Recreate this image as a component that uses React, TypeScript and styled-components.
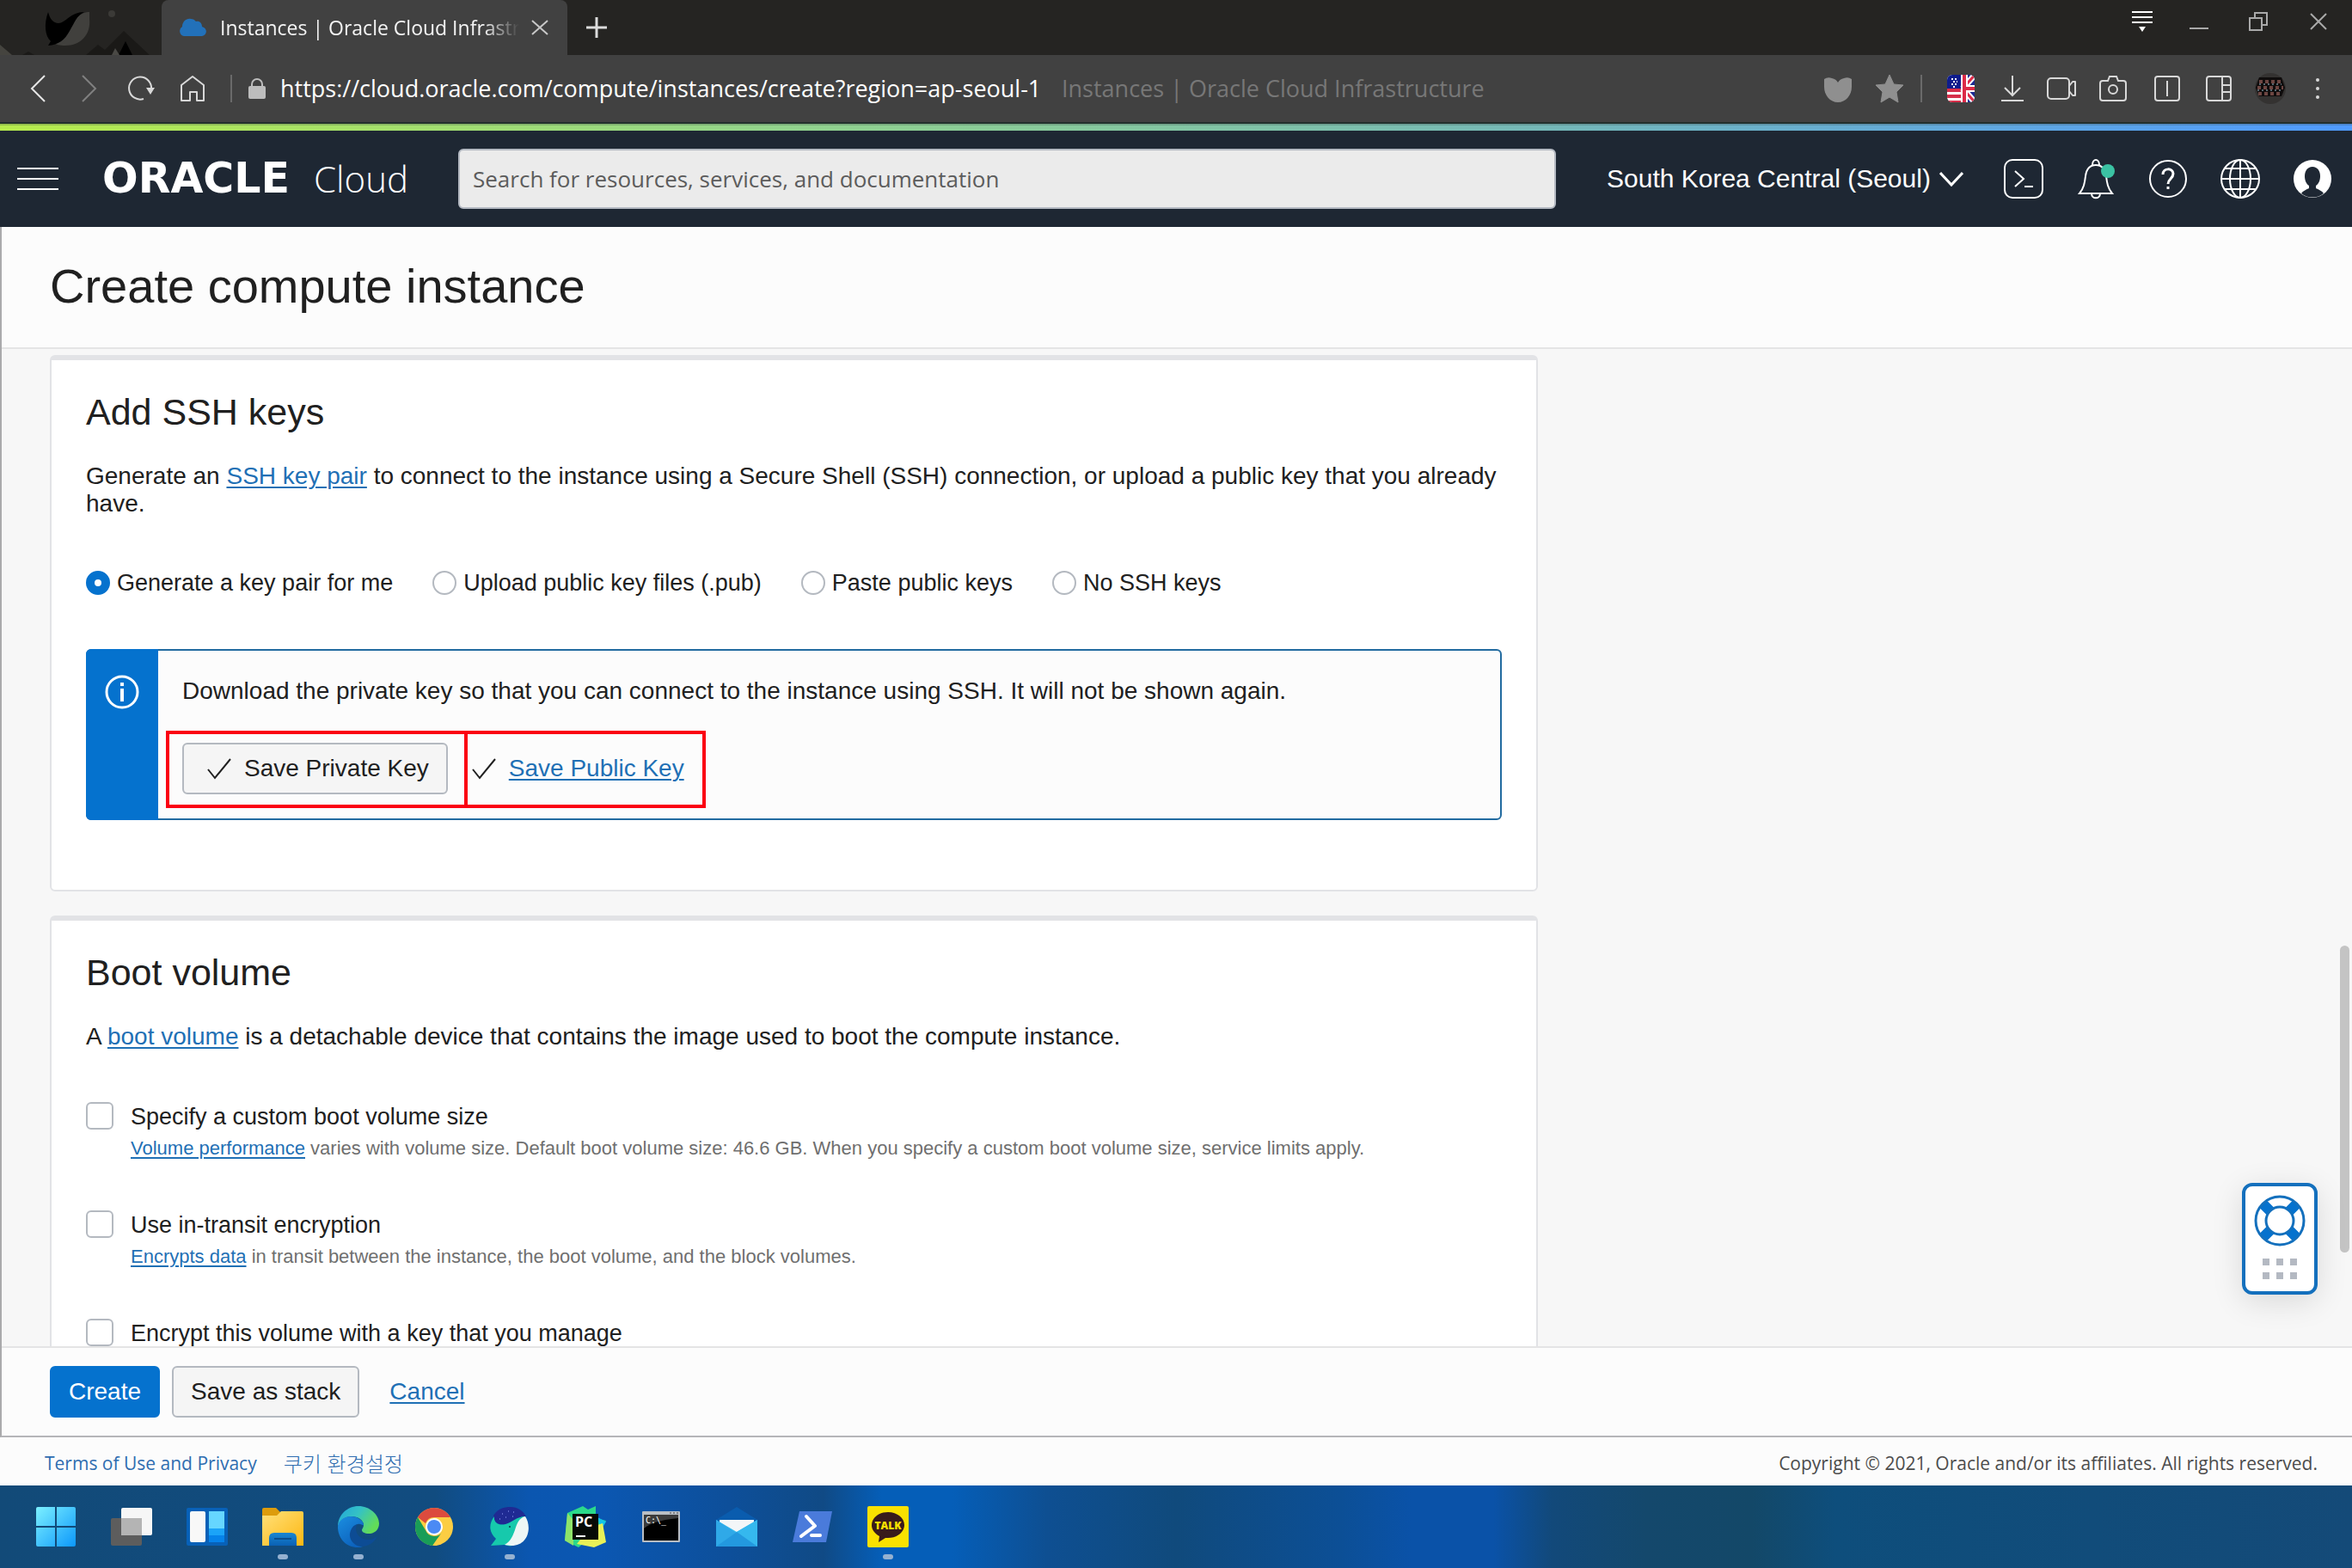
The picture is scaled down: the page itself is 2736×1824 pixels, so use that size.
import React from "react";
import styled, { createGlobalStyle } from "styled-components";

const sans = `"Liberation Sans", Arial, "Noto Sans CJK KR", sans-serif`;
const ui = `"Open Sans", "Noto Sans", "Noto Sans CJK KR", sans-serif`;

const Global = createGlobalStyle`
  *, *::before, *::after { box-sizing: border-box; }
  body { margin: 0; background: #f7f7f7; color: #202020; font-family: ${sans}; font-size: 28px; line-height: 32px; }
  button, input, select { font: inherit; color: inherit; margin: 0; }
  h1, h2, p { margin: 0; font-weight: 400; }
`;

const Screen = styled.div`
  display: flex;
  flex-direction: column;
  height: 100vh;
  overflow: hidden;
`;

/* ---------- Browser chrome ---------- */

const TabStrip = styled.header`
  display: flex;
  flex: none;
  height: 64px;
  background: #252422;
  font-family: ${ui};
`;

const Skin = styled.svg`
  display: block;
  width: 188px;
  height: 64px;
  flex: none;
`;

const Tab = styled.div`
  display: flex;
  align-items: center;
  width: 472px;
  padding: 0 20px;
  background: #414141;
  border-radius: 8px 8px 0 0;
  color: #f4f4f4;
`;

const TabTitle = styled.span`
  flex: 1;
  margin: 0 12px 0 16px;
  font-size: 23px;
  overflow: hidden;
  white-space: nowrap;
  mask-image: linear-gradient(90deg, #000 88%, transparent);
`;

const Spacer = styled.div`
  flex: 1;
`;

const IconButton = styled.button<{ $w?: number }>`
  display: flex;
  align-items: center;
  justify-content: center;
  flex: none;
  width: ${(p) => p.$w ?? 60}px;
  padding: 0;
  border: 0;
  background: none;
  svg { display: block; overflow: visible; }
`;

const WindowButtons = styled.div`
  display: flex;
  height: 50px;
  padding-right: 4px;
`;

const Toolbar = styled.nav`
  display: flex;
  flex: none;
  align-items: stretch;
  height: 80px;
  padding: 0 15px 0 14px;
  background: #414141;
  border-bottom: 2px solid #23302d;
  font-family: ${ui};
`;

const Divider = styled.span<{ $m: string }>`
  flex: none;
  align-self: center;
  width: 2px;
  height: 32px;
  margin: ${(p) => p.$m};
  background: #6a6a6a;
`;

const Address = styled.div`
  display: flex;
  flex: 1;
  align-items: center;
  gap: 17px;
  min-width: 0;
  font-size: 27px;
  white-space: nowrap;
  color: #777;
`;

const UrlInput = styled.input`
  width: 892px;
  padding: 0;
  border: 0;
  background: none;
  color: #fff;
  line-height: 40px;
`;

/* ---------- Oracle header ---------- */

const Rainbow = styled.div`
  flex: none;
  height: 8px;
  background: linear-gradient(90deg, #b6ec4c, #92d48c 33%, #74b8b8 66%, #4f9bff);
  border-top: 2px solid rgba(60, 70, 70, 0.25);
`;

const CloudHeader = styled.header`
  display: flex;
  flex: none;
  align-items: center;
  height: 112px;
  padding-right: 4px;
  background: #1e2733;
  color: #fff;
`;

const Brand = styled.a`
  display: flex;
  align-items: baseline;
  justify-content: space-between;
  flex: none;
  width: 356px;
  margin: 0 58px 0 31px;
  color: #fff;
  text-decoration: none;
  line-height: 60px;
`;

const BrandName = styled.span`
  font: 700 49px/60px "DejaVu Sans", sans-serif;
`;

const BrandProduct = styled.span`
  font: 300 42px/60px "Open Sans", sans-serif;
`;

const Search = styled.input`
  flex: 1;
  min-width: 0;
  height: 70px;
  padding: 0 15px;
  border: 2px solid #b4b9c2;
  border-radius: 6px;
  background: #ebebeb;
  font-family: ${ui};
  font-size: 26px;
  &::placeholder { color: #5c5c5c; opacity: 1; }
`;

const Region = styled.label`
  display: flex;
  align-items: center;
  gap: 10px;
  margin: 0 28px 0 59px;
  svg { display: block; }
`;

const RegionSelect = styled.select`
  appearance: none;
  padding: 0;
  border: 0;
  background: none;
  font-size: 30px;
`;

/* ---------- Page ---------- */

const Page = styled.main`
  position: relative;
  display: flex;
  flex: 1;
  flex-direction: column;
  min-height: 0;
  border-left: 2px solid #aaaaac;
  border-bottom: 2px solid #b5b5b9;
`;

const TitleBar = styled.div`
  flex: none;
  padding: 37px 56px 39px;
  background: #fcfcfc;
  border-bottom: 2px solid #e4e4e5;
`;

const PageTitle = styled.h1`
  font-size: 56px;
  line-height: 64px;
`;

const Scroller = styled.div`
  flex: 1;
  min-height: 0;
  overflow: hidden;
  padding: 7px 15px 0 56px;
`;

const Sections = styled.div`
  display: flex;
  flex-direction: column;
  gap: 28px;
  width: 65%;
`;

const Card = styled.section`
  padding: 35px 40px 81px;
  background: #fff;
  border: 2px solid #e2e3e6;
  border-top-width: 6px;
  border-radius: 6px;
`;

const CardTitle = styled.h2`
  margin-bottom: 34px;
  font-size: 43px;
  line-height: 50px;
`;

const Lead = styled.p`
  margin-bottom: 60px;
`;

const Link = styled.a`
  color: #1f70b5;
  text-decoration: underline 2px;
  text-underline-offset: 3px;
`;

const RadioRow = styled.div`
  display: flex;
  gap: 46px;
  margin-bottom: 61px;
`;

const RadioLabel = styled.label`
  display: flex;
  align-items: center;
  gap: 8px;
  font-size: 27px;
  white-space: nowrap;
`;

const Radio = styled.input`
  appearance: none;
  width: 28px;
  height: 28px;
  border: 2px solid #b4b9c0;
  border-radius: 50%;
  background: #fff;
  &:checked { border: 10px solid #0572ce; }
`;

const Alert = styled.div`
  display: flex;
  background: #fcfcfc;
  border: 2px solid #226ba0;
  border-radius: 6px;
`;

const AlertSide = styled.div`
  display: flex;
  justify-content: center;
  flex: none;
  width: 84px;
  margin: -2px 0 -2px -2px;
  padding-top: 30px;
  background: #0572ce;
  border-radius: 6px 0 0 6px;
`;

const AlertBody = styled.div`
  padding: 31px 28px 28px;
`;

const KeyActions = styled.div`
  display: flex;
  gap: 28px;
  margin-top: 44px;
`;

const Marked = styled.div<{ $inset: string }>`
  position: relative;
  display: flex;
  align-items: center;
  gap: 15px;
  &::after {
    content: "";
    position: absolute;
    inset: ${(p) => p.$inset};
    border: 4px solid #fb0012;
    pointer-events: none;
  }
`;

const Button = styled.button<{ $primary?: boolean }>`
  display: flex;
  align-items: center;
  gap: 15px;
  height: 60px;
  padding: 0 20px;
  border: 2px solid ${(p) => (p.$primary ? "#0572ce" : "#b4b9c0")};
  border-radius: 6px;
  background: ${(p) => (p.$primary ? "#0572ce" : "#f5f5f5")};
  color: ${(p) => (p.$primary ? "#fff" : "#202020")};
`;

const MarkSlot = styled.span`
  display: flex;
  margin-left: 7px;
`;

const Option = styled.div`
  display: grid;
  grid-template-columns: 32px 1fr;
  column-gap: 20px;
  margin-bottom: 58px;
`;

const Checkbox = styled.input`
  appearance: none;
  width: 32px;
  height: 32px;
  border: 2px solid #b4b9c0;
  border-radius: 6px;
  background: #fff;
`;

const OptionLabel = styled.label`
  font-size: 27px;
  line-height: 34px;
`;

const Hint = styled.p`
  grid-column: 2;
  margin-top: 6px;
  color: #6f6f6f;
  font-size: 22px;
  line-height: 28px;
`;

const Actions = styled.div`
  display: flex;
  flex: none;
  align-items: center;
  gap: 14px;
  height: 104px;
  padding: 0 56px;
  background: #fcfcfc;
  border-top: 2px solid #e4e4e5;
`;

const CancelLink = styled(Link)`
  margin-left: 21px;
`;

const ScrollThumb = styled.div`
  position: absolute;
  right: 3px;
  top: 836px;
  width: 11px;
  height: 357px;
  border-radius: 6px;
  background: #c4c4c4;
`;

const HelpWidget = styled.button`
  position: absolute;
  right: 40px;
  bottom: 164px;
  display: flex;
  flex-direction: column;
  align-items: center;
  width: 88px;
  height: 130px;
  padding: 10px 0 0;
  border: 4px solid #1470bd;
  border-radius: 12px;
  background: #fff;
  box-shadow: 0 8px 36px rgba(0, 0, 0, 0.12);
`;

const Dots = styled.span`
  display: grid;
  grid-template-columns: repeat(3, 8px);
  gap: 8px;
  margin-top: 14px;
  i { height: 8px; background: #b4b9c2; }
`;

const PageFooter = styled.footer`
  display: flex;
  flex: none;
  align-items: center;
  gap: 31px;
  height: 56px;
  padding: 4px 40px 0 52px;
  background: #fcfcfc;
  color: #4c4c4c;
  font-family: ${ui};
  font-size: 21px;
`;

const FooterLink = styled.a`
  color: #2f6db0;
  text-decoration: none;
  &:lang(ko) {
    font-family: "Noto Sans CJK KR", sans-serif;
    font-size: 24px;
    font-weight: 300;
  }
`;

/* ---------- Taskbar ---------- */

const Taskbar = styled.nav`
  display: flex;
  flex: none;
  height: 96px;
  padding-left: 21px;
  background: linear-gradient(90deg, #124a78 0, #114c80 18.5%, #0b56b0 22.5%, #0b57b2 25.5%, #0d4f9a 31%, #104a85 35%, #055eb8 37.5%, #055eb8 40.5%, #0e4f92 44.5%, #104a7c 50%, #0c4f96 57%, #0a52a8 60%, #0a52a8 63.5%, #12497a 66%, #14486c 70%, #134868 74.5%, #0e4e7c 78%, #144a78 100%);
`;

const AppButton = styled.button<{ $open?: boolean }>`
  position: relative;
  display: flex;
  align-items: center;
  justify-content: center;
  width: 88px;
  padding: 0;
  border: 0;
  background: none;
  svg { display: block; overflow: visible; }
  &::after {
    content: "";
    position: absolute;
    bottom: 10px;
    width: 12px;
    height: 6px;
    border-radius: 3px;
    background: ${(p) => (p.$open ? "#95b1d0" : "transparent")};
  }
`;

/* ---------- Icons ---------- */

type LineProps = { w: number; h: number; c?: string; s?: number; children: React.ReactNode };
const Line = ({ w, h, c = "#d8d8d8", s = 2, children }: LineProps) => (
  <svg width={w} height={h} viewBox={`0 0 ${w} ${h}`} fill="none" stroke={c} strokeWidth={s} aria-hidden="true">
    {children}
  </svg>
);

const SkinArt = () => (
  <Skin viewBox="0 0 188 64" aria-hidden="true">
    <path d="M0 52l14 12H0z" fill="#45443f" />
    <path d="M26 64l7-4 7 4zM100 64l14-12 8 6 22-22 30 28z" fill="#1a1917" />
    <path d="M138 64l8-16 8 16z" fill="#000" />
    <path d="M130 64l4-8 5 8z" fill="#4a4945" />
    <circle cx="130" cy="16" r="4" fill="#3b3a37" />
    <path d="M104 22c2 18-10 31-28 31-6 0-12-1-14-4 14-2 18-15 26-26 5-7 10-9 16-9z" fill="#41403d" />
    <path d="M56 14c2 8 6 13 12 13 8 0 14-13 30-13-9 4-11 12-17 22-6 11-13 16-25 17l3-5c-7-6-8-21-3-34z" fill="#000" />
  </Skin>
);

const CloudIcon = () => (
  <svg width="32" height="22" viewBox="0 0 32 22" aria-hidden="true">
    <path d="M6 21a6 6 0 01-2-11C4 4 9 0 14 1c3 0 4 1 6 3 4-1 7 2 7 6 7 2 6 10 0 11z" fill="#2271ba" />
  </svg>
);

const Check = () => (
  <Line w={28} h={26} c="#202020">
    <path d="M1 14l8 10L27 2" />
  </Line>
);

const Flag = () => (
  <svg width="32" height="32" viewBox="0 0 32 32" aria-hidden="true">
    <clipPath id="flag"><rect width="32" height="32" rx="6" /></clipPath>
    <g clipPath="url(#flag)">
      <path d="M0 0h32v32H0z" fill="#fff" />
      <path d="M0 0h17v16H0z" fill="#0e1c8c" />
      <path d="M0 16h17v4H0zM0 23h17v4H0zM0 30h17v2H0z" fill="#d62f4a" />
      <path d="M5 5h2M9 5h2M7 8h2M11 8h1M5 11h2M9 11h2M7 14h2" stroke="#fff" strokeWidth="2" />
      <path d="M18 0h14v32H18z" fill="#1b2a94" />
      <path d="M18 16L36-4M18 16l18 20" stroke="#fff" strokeWidth="7" />
      <path d="M18 16L36-4M18 16l18 20" stroke="#dc2b48" strokeWidth="3" />
      <path d="M16 0h8v32h-8zM16 12h16v8H16z" fill="#fff" />
      <path d="M18 0h4v32h-4zM18 14h14v4H18z" fill="#dc2b48" />
    </g>
  </svg>
);

const Lifebuoy = () => (
  <svg width="60" height="60" viewBox="0 0 60 60" aria-hidden="true">
    <circle cx="30" cy="30" r="22" fill="none" stroke="#fff" strokeWidth="13" />
    <path d="M10 10l12 12M50 10L38 22M10 50l12-12M50 50L38 38" stroke="#0572ce" strokeWidth="12" />
    <circle cx="30" cy="30" r="28" fill="none" stroke="#1470bd" strokeWidth="3" />
    <circle cx="30" cy="30" r="16" fill="#fff" stroke="#1470bd" strokeWidth="3" />
  </svg>
);

const apps: { name: string; open?: boolean; icon: React.ReactNode }[] = [
  {
    name: "Start",
    icon: (
      <svg width="46" height="46" viewBox="0 0 46 46">
        <defs>
          <linearGradient id="win" gradientUnits="userSpaceOnUse" x1="0" y1="0" x2="46" y2="46">
            <stop stopColor="#7cf0ff" /><stop offset="1" stopColor="#0c98fb" />
          </linearGradient>
        </defs>
        <path d="M2 0h20v22H0V2q0-2 2-2zM24 0h20q2 0 2 2v20H24zM0 24h22v22H2q-2 0-2-2zM24 24h22v20q0 2-2 2H24z" fill="url(#win)" />
      </svg>
    ),
  },
  {
    name: "Task view",
    icon: (
      <svg width="48" height="44" viewBox="0 0 48 44">
        <rect y="12" width="36" height="32" rx="2" fill="#5d5d5d" />
        <rect x="12" width="36" height="32" rx="2" fill="#f6f6f6" />
        <path d="M12 12h24v20H12z" fill="#b4b4b4" />
      </svg>
    ),
  },
  {
    name: "Widgets",
    icon: (
      <svg width="48" height="44" viewBox="0 0 48 44">
        <rect width="48" height="44" rx="2" fill="#0861b8" />
        <rect x="4" y="4" width="18" height="36" rx="2" fill="#f8f8f8" />
        <path d="M26 4h18v20H26z" fill="#66d6ff" />
        <path d="M26 24h18v8H26z" fill="#1ba4f8" />
        <path d="M26 32h18v8H26z" fill="#0683ea" />
      </svg>
    ),
  },
  {
    name: "File Explorer",
    open: true,
    icon: (
      <svg width="48" height="44" viewBox="0 0 48 44">
        <defs>
          <linearGradient id="fold" x1="0" y1="0" x2="1" y2="1"><stop stopColor="#ffe07a" /><stop offset="1" stopColor="#fdb813" /></linearGradient>
          <linearGradient id="foldb" x1="0" y1="0" x2="0" y2="1"><stop stopColor="#1a86d0" /><stop offset="1" stopColor="#0a61b5" /></linearGradient>
        </defs>
        <path d="M0 12V2q0-2 2-2h14l6 6v6z" fill="#dd9c0c" />
        <path d="M0 9h17l5-5h24q2 0 2 2v38H0z" fill="url(#fold)" />
        <path d="M8 44V35q0-6 6-6h20q6 0 6 6v9z" fill="url(#foldb)" />
        <path d="M14 36h20" stroke="#0b4e8c" strokeWidth="2" />
      </svg>
    ),
  },
  {
    name: "Microsoft Edge",
    open: true,
    icon: (
      <svg width="48" height="48" viewBox="0 0 48 48">
        <defs>
          <linearGradient id="edgeA" x1="0" y1="0" x2="1" y2=".5"><stop stopColor="#21a5dc" /><stop offset=".5" stopColor="#35c2c4" /><stop offset="1" stopColor="#62dc58" /></linearGradient>
          <linearGradient id="edgeB" x1="0" y1="0" x2=".6" y2="1"><stop stopColor="#1b8ee0" /><stop offset="1" stopColor="#0c62bd" /></linearGradient>
        </defs>
        <path d="M0 24C0 10 11 0 24 0s24 10 24 20c0 8-6 12-12 12-5 0-8-2-8-4s2-3 2-6c0-6-7-10-14-10S2 16 0 24z" fill="url(#edgeA)" />
        <path d="M0 24c1-8 8-12 15-12 8 0 15 5 15 10-1 1-3-2-7-1-6 2-9 8-7 15 2 6 7 10 13 11-2 1-4 1-6 1C9 48 0 37 0 24z" fill="url(#edgeB)" />
        <path d="M23 21c-5 6 0 18 12 18 5 0 8-2 11-4-4 8-11 12-18 12-8 0-15-7-14-15 1-6 4-10 9-11z" fill="#0d4c94" />
      </svg>
    ),
  },
  {
    name: "Chrome",
    icon: (
      <svg width="44" height="44" viewBox="0 0 44 44">
        <circle cx="22" cy="22" r="22" fill="#fccd43" />
        <path d="M3 11a22 22 0 0138 0H22a11 11 0 00-10 7z" fill="#dc4b3e" />
        <path d="M3 11a22 22 0 0017 33l12-17a11 11 0 01-20-1z" fill="#199d58" />
        <circle cx="22" cy="22" r="10" fill="#fff" />
        <circle cx="22" cy="22" r="8" fill="#4b8af4" />
      </svg>
    ),
  },
  {
    name: "Whale",
    open: true,
    icon: (
      <svg width="46" height="46" viewBox="0 0 46 46">
        <path d="M4 10C9 2 16 0 24 0c8 0 14 4 18 11-8 0-14 5-20 8C14 22 4 20 4 10z" fill="#1f2a93" />
        <path d="M5 11c-1 8 6 11 13 9 8-2 13-9 23-9L26 45c-3 1-6 0-9-1L1 45l6-8C-1 30-2 20 5 11z" fill="#16c9ac" />
        <path d="M41 11c8 12 4 34-16 34-4 0-6-1-8-1C32 36 27 14 41 11z" fill="#eef6f5" />
        <circle cx="23" cy="23" r="1" fill="#0b3b4b" />
        <path d="M14 8h1M21 5h1M27 6h1M18 12h1M26 11h1M11 14h1" stroke="#9aa6ff" strokeWidth="1" />
      </svg>
    ),
  },
  {
    name: "PyCharm",
    icon: (
      <svg width="48" height="48" viewBox="0 0 48 48">
        <path d="M3 8l18-8 6 4 9-4v14l12 3-5 8-27 23L0 40z" fill="#2bd98b" />
        <path d="M0 40l3-32 7 8v30z" fill="#8fe36a" />
        <path d="M38 13l10 5-6 10z" fill="#12c5e8" />
        <path d="M38 22l6-2 4 22-14 6-20-4 8-10z" fill="#e8f157" />
        <path d="M9 9h30v30H9z" fill="#060a06" />
        <text x="12" y="24" fill="#fff" fontFamily="Open Sans, sans-serif" fontSize="16" fontWeight="700">PC</text>
        <path d="M13 34h11v2H13z" fill="#fff" />
      </svg>
    ),
  },
  {
    name: "Command Prompt",
    icon: (
      <svg width="44" height="36" viewBox="0 0 44 36">
        <rect width="44" height="36" rx="1" fill="#b9bec4" />
        <path d="M2 4h40v30H2z" fill="#000" />
        <path d="M2 4h40v4C22 10 8 14 2 20z" fill="#3b3b3b" />
        <text x="4" y="14" fill="#fff" fontFamily="DejaVu Sans Mono, monospace" fontSize="10">C:\_</text>
        <path d="M32 2h2M36 2h2M40 2h2" stroke="#444" />
      </svg>
    ),
  },
  {
    name: "Mail",
    icon: (
      <svg width="48" height="46" viewBox="0 0 48 46">
        <path d="M0 15L24 0l24 15v4H0z" fill="#0a5cae" />
        <path d="M4 15h40v20H4z" fill="#f3f6f8" />
        <path d="M0 15l24 14 24-14v31H0z" fill="#38bdf0" />
        <path d="M0 46V15l48 31z" fill="#2fa9e8" />
        <path d="M0 46l24-17L48 15v31z" fill="#35b8ee" />
        <path d="M24 29l24 17H0z" fill="#2399df" />
      </svg>
    ),
  },
  {
    name: "PowerShell",
    icon: (
      <svg width="46" height="36" viewBox="0 0 46 36">
        <path d="M8 0h38l-7 36H0z" fill="#4a7bdb" />
        <path d="M16 6l10 11-16 12M22 28h10" fill="none" stroke="#fff" strokeWidth="4" strokeLinecap="round" strokeLinejoin="round" />
      </svg>
    ),
  },
  {
    name: "KakaoTalk",
    open: true,
    icon: (
      <svg width="48" height="48" viewBox="0 0 48 48">
        <rect width="48" height="48" rx="2" fill="#fae100" />
        <path d="M24 7c11 0 19 7 19 15s-8 15-19 15h-3l-8 5 1-7C9 32 5 28 5 22 5 14 13 7 24 7z" fill="#391b1b" />
        <text x="24" y="27" textAnchor="middle" fill="#fae100" fontFamily="Open Sans, sans-serif" fontSize="12" fontWeight="800">TALK</text>
      </svg>
    ),
  },
];

const keyOptions = ["Generate a key pair for me", "Upload public key files (.pub)", "Paste public keys", "No SSH keys"];

const bootOptions = [
  { id: "size", label: "Specify a custom boot volume size", link: "Volume performance", hint: " varies with volume size. Default boot volume size: 46.6 GB. When you specify a custom boot volume size, service limits apply." },
  { id: "transit", label: "Use in-transit encryption", link: "Encrypts data", hint: " in transit between the instance, the boot volume, and the block volumes." },
  { id: "key", label: "Encrypt this volume with a key that you manage", link: "", hint: "" },
];

const Browser = () => (
  <>
    <TabStrip>
      <SkinArt />
      <Tab>
        <CloudIcon />
        <TabTitle>Instances | Oracle Cloud Infrastructure</TabTitle>
        <IconButton $w={24} aria-label="Close tab">
          <Line w={20} h={18} c="#c8c8c8"><path d="M1 1l18 16M19 1L1 17" /></Line>
        </IconButton>
      </Tab>
      <IconButton $w={68} aria-label="New tab">
        <Line w={24} h={24} c="#dcdcdc" s={3}><path d="M12 0v24M0 12h24" /></Line>
      </IconButton>
      <Spacer />
      <WindowButtons>
        <IconButton $w={64} aria-label="Menu">
          <Line w={24} h={24} c="#fff"><path d="M0 1h24M0 7h24M0 13h24" /><path d="M8 18h8l-4 6z" fill="#fff" stroke="none" /></Line>
        </IconButton>
        <IconButton $w={68} aria-label="Minimize">
          <Line w={22} h={18} c="#a9a9a9"><path d="M0 17h22" /></Line>
        </IconButton>
        <IconButton $w={70} aria-label="Restore">
          <Line w={22} h={22} c="#a9a9a9"><path d="M1 7h14v14H1zM7 7V1h14v14h-6" /></Line>
        </IconButton>
        <IconButton $w={70} aria-label="Close window">
          <Line w={20} h={20} c="#a9a9a9"><path d="M1 1l18 18M19 1L1 19" /></Line>
        </IconButton>
      </WindowButtons>
    </TabStrip>
    <Toolbar>
      <IconButton aria-label="Back"><Line w={18} h={32} c="#e6e6e6"><path d="M17 1L2 16l15 15" /></Line></IconButton>
      <IconButton aria-label="Forward"><Line w={18} h={32} c="#808080"><path d="M1 1l15 15L1 31" /></Line></IconButton>
      <IconButton aria-label="Reload">
        <Line w={32} h={28}><path d="M19 26A13 13 0 1128 15" /><path d="M22 13h10l-5 8z" fill="#d8d8d8" stroke="none" /></Line>
      </IconButton>
      <IconButton aria-label="Home"><Line w={28} h={30}><path d="M1 11L14 1l13 10v18h-8V19h-8v10H1z" strokeLinejoin="round" /></Line></IconButton>
      <Divider $m="0 19px 0 14px" />
      <Address>
        <svg width="20" height="24" viewBox="0 0 20 24" role="img" aria-label="Secure">
          <path d="M4 10V7a6 6 0 0112 0v3" fill="none" stroke="#bdbdbd" strokeWidth="2" />
          <rect y="9" width="20" height="15" rx="2" fill="#bdbdbd" />
        </svg>
        <UrlInput aria-label="Address" defaultValue="https://cloud.oracle.com/compute/instances/create?region=ap-seoul-1" />
        <span>Instances | Oracle Cloud Infrastructure</span>
      </Address>
      <IconButton aria-label="Tracking protection">
        <svg width="32" height="32" viewBox="0 0 32 32"><path d="M0 5q4-3 9-1 5 1 7 5 2-4 7-5 5-2 9 1v9c0 10-7 18-16 18S0 24 0 14z" fill="#8f8f8f" /></svg>
      </IconButton>
      <IconButton aria-label="Bookmark">
        <svg width="32" height="32" viewBox="0 0 32 32"><path d="M16 0l5 11 11 1-8 8 2 12-10-6-10 6 2-12-8-8 11-1z" fill="#8f8f8f" stroke="#8f8f8f" strokeLinejoin="round" /></svg>
      </IconButton>
      <Divider $m="0 15px 0 6px" />
      <IconButton aria-label="Translate"><Flag /></IconButton>
      <IconButton aria-label="Downloads"><Line w={26} h={30}><path d="M13 0v23M4 14l9 9 9-9M0 29h26" /></Line></IconButton>
      <IconButton $w={54} aria-label="Record"><Line w={34} h={26}><rect x="1" y="1" width="25" height="24" rx="4" /><path d="M26 10l4-5h3v16h-3l-4-5" strokeLinejoin="round" /></Line></IconButton>
      <IconButton $w={66} aria-label="Capture"><Line w={32} h={30}><path d="M4 6h6l2-5h8l2 5h6q3 0 3 3v17q0 3-3 3H4q-3 0-3-3V9q0-3 3-3z" /><circle cx="16" cy="16" r="5" /></Line></IconButton>
      <IconButton aria-label="Split view"><Line w={30} h={30}><rect x="1" y="1" width="28" height="28" rx="3" /><path d="M15 6v18" /></Line></IconButton>
      <IconButton aria-label="Sidebar"><Line w={30} h={30}><rect x="1" y="1" width="28" height="28" rx="3" /><path d="M19 1v28M19 11h10M19 19h10" /></Line></IconButton>
      <IconButton aria-label="Profile">
        <svg width="36" height="36" viewBox="0 0 36 36">
          <circle cx="18" cy="18" r="18" fill="#343231" />
          <path d="M5 5h26l4 12-4 10H5L1 17z" fill="#0f0c0c" />
          <path d="M5 10h26M3 17h30M4 24h28" stroke="#6d4642" strokeWidth="4" strokeDasharray="4 3" />
          <path d="M5 13h26M3 20h30" stroke="#56676f" strokeWidth="2" strokeDasharray="2 3" />
        </svg>
      </IconButton>
      <IconButton $w={50} aria-label="More">
        <svg width="4" height="24" viewBox="0 0 4 24" fill="#d8d8d8"><circle cx="2" cy="2" r="2" /><circle cx="2" cy="12" r="2" /><circle cx="2" cy="22" r="2" /></svg>
      </IconButton>
    </Toolbar>
  </>
);

const OracleHeader = () => (
  <>
    <Rainbow />
    <CloudHeader>
      <IconButton $w={88} aria-label="Navigation menu">
        <Line w={48} h={26} c="#fff"><path d="M0 1h48M0 13h48M0 25h48" /></Line>
      </IconButton>
      <Brand href="#home">
        <BrandName>ORACLE</BrandName>
        <BrandProduct>Cloud</BrandProduct>
      </Brand>
      <Search type="search" aria-label="Search" placeholder="Search for resources, services, and documentation" />
      <Region>
        <RegionSelect aria-label="Region">
          <option>South Korea Central (Seoul)</option>
        </RegionSelect>
        <Line w={28} h={18} c="#fff" s={3}><path d="M1 2l13 14L27 2" /></Line>
      </Region>
      <IconButton $w={84} aria-label="Cloud Shell">
        <Line w={46} h={46} c="#fff"><rect x="1" y="1" width="44" height="44" rx="9" /><path d="M13 14l10 9-10 9M24 32h10" /></Line>
      </IconButton>
      <IconButton $w={84} aria-label="Announcements">
        <Line w={40} h={46} c="#fff">
          <path d="M1 40c5-6 6-12 7-20 1-8 5-13 12-13s11 5 12 13c1 8 2 14 7 20zM16 7c0-8 8-8 8 0M15 40c0 7 10 7 10 0" />
          <circle cx="34" cy="14" r="8" fill="#3bc2a3" stroke="none" />
        </Line>
      </IconButton>
      <IconButton $w={84} aria-label="Help">
        <Line w={44} h={44} c="#fff"><circle cx="22" cy="22" r="21" /><path d="M16 17c0-8 12-8 12-1 0 6-6 6-6 12M22 31v3" strokeWidth="3" /></Line>
      </IconButton>
      <IconButton $w={84} aria-label="Language">
        <Line w={46} h={46} c="#fff"><circle cx="23" cy="23" r="22" /><ellipse cx="23" cy="23" rx="12" ry="22" /><path d="M23 1v44M1 23h44M5 11h36M5 35h36" /></Line>
      </IconButton>
      <IconButton $w={84} aria-label="User">
        <svg width="44" height="44" viewBox="0 0 44 44">
          <circle cx="22" cy="22" r="22" fill="#fff" />
          <path d="M22 8c6 0 9 5 9 11 0 5-2 9-5 11v3c4 2 7 3 9 6a21 21 0 01-26 0c2-3 5-4 9-6v-3c-3-2-5-6-5-11 0-6 3-11 9-11z" fill="#1e2733" />
        </svg>
      </IconButton>
    </CloudHeader>
  </>
);

export default function App() {
  return (
    <Screen>
      <Global />
      <Browser />
      <OracleHeader />
      <Page>
        <TitleBar>
          <PageTitle>Create compute instance</PageTitle>
        </TitleBar>
        <Scroller>
          <Sections>
            <Card>
              <CardTitle>Add SSH keys</CardTitle>
              <Lead>
                Generate an <Link href="#ssh">SSH key pair</Link> to connect to the instance using a Secure Shell (SSH) connection, or upload a public key that you already have.
              </Lead>
              <RadioRow role="radiogroup" aria-label="SSH key source">
                {keyOptions.map((o, i) => (
                  <RadioLabel key={o}>
                    <Radio type="radio" name="ssh" defaultChecked={i === 0} />
                    {o}
                  </RadioLabel>
                ))}
              </RadioRow>
              <Alert>
                <AlertSide>
                  <Line w={40} h={40} c="#fff" s={3}>
                    <circle cx="20" cy="20" r="18" />
                    <path d="M20 16v15M20 9v4" strokeWidth="4" />
                  </Line>
                </AlertSide>
                <AlertBody>
                  <p>Download the private key so that you can connect to the instance using SSH. It will not be shown again.</p>
                  <KeyActions>
                    <Marked $inset="-14px -23px -16px -19px">
                      <Button>
                        <MarkSlot><Check /></MarkSlot>
                        Save Private Key
                      </Button>
                    </Marked>
                    <Marked $inset="-14px -25px -16px -9px">
                      <Check />
                      <Link href="#public-key">Save Public Key</Link>
                    </Marked>
                  </KeyActions>
                </AlertBody>
              </Alert>
            </Card>
            <Card>
              <CardTitle>Boot volume</CardTitle>
              <Lead>
                A <Link href="#boot">boot volume</Link> is a detachable device that contains the image used to boot the compute instance.
              </Lead>
              {bootOptions.map((o) => (
                <Option key={o.id}>
                  <Checkbox type="checkbox" id={o.id} />
                  <OptionLabel htmlFor={o.id}>{o.label}</OptionLabel>
                  {o.hint && <Hint><Link href={`#${o.id}`}>{o.link}</Link>{o.hint}</Hint>}
                </Option>
              ))}
            </Card>
          </Sections>
        </Scroller>
        <Actions>
          <Button $primary>Create</Button>
          <Button>Save as stack</Button>
          <CancelLink href="#cancel">Cancel</CancelLink>
        </Actions>
        <ScrollThumb />
        <HelpWidget aria-label="Support">
          <Lifebuoy />
          <Dots><i /><i /><i /><i /><i /><i /></Dots>
        </HelpWidget>
      </Page>
      <PageFooter>
        <FooterLink href="#terms">Terms of Use and Privacy</FooterLink>
        <FooterLink href="#cookies" lang="ko">쿠키 환경설정</FooterLink>
        <Spacer />
        <span>Copyright © 2021, Oracle and/or its affiliates. All rights reserved.</span>
      </PageFooter>
      <Taskbar aria-label="Taskbar">
        {apps.map((a) => (
          <AppButton key={a.name} $open={a.open} aria-label={a.name}>{a.icon}</AppButton>
        ))}
      </Taskbar>
    </Screen>
  );
}
